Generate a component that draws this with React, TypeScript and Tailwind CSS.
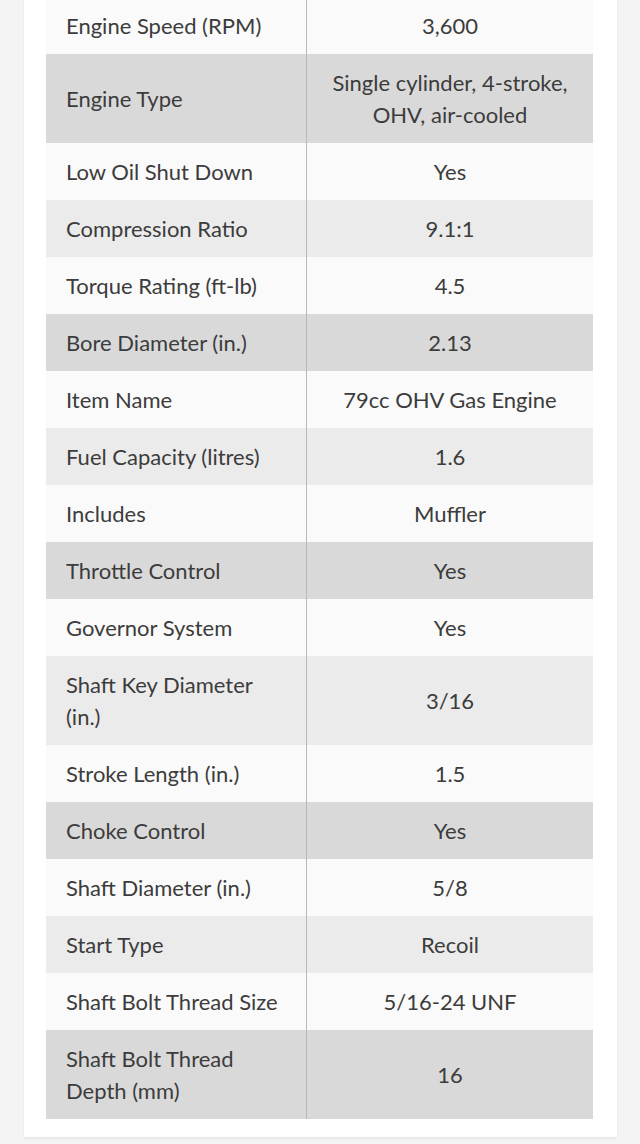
import React from "react";

type Row = { k: React.ReactNode; v: React.ReactNode; tone: "w" | "m" | "d" };

const rows: Row[] = [
  { k: "Engine Speed (RPM)", v: "3,600", tone: "w" },
  { k: "Engine Type", v: (<>Single cylinder, 4-stroke,<br />OHV, air-cooled</>), tone: "d" },
  { k: "Low Oil Shut Down", v: "Yes", tone: "w" },
  { k: "Compression Ratio", v: "9.1:1", tone: "m" },
  { k: "Torque Rating (ft-lb)", v: "4.5", tone: "w" },
  { k: "Bore Diameter (in.)", v: "2.13", tone: "d" },
  { k: "Item Name", v: "79cc OHV Gas Engine", tone: "w" },
  { k: "Fuel Capacity (litres)", v: "1.6", tone: "m" },
  { k: "Includes", v: "Muffler", tone: "w" },
  { k: "Throttle Control", v: "Yes", tone: "d" },
  { k: "Governor System", v: "Yes", tone: "w" },
  { k: (<>Shaft Key Diameter<br />(in.)</>), v: "3/16", tone: "m" },
  { k: "Stroke Length (in.)", v: "1.5", tone: "w" },
  { k: "Choke Control", v: "Yes", tone: "d" },
  { k: "Shaft Diameter (in.)", v: "5/8", tone: "w" },
  { k: "Start Type", v: "Recoil", tone: "m" },
  { k: "Shaft Bolt Thread Size", v: "5/16-24 UNF", tone: "w" },
  { k: (<>Shaft Bolt Thread<br />Depth (mm)</>), v: "16", tone: "d" },
];

const toneClass = {
  w: "bg-[#fafafa]",
  m: "bg-[#ebebeb]",
  d: "bg-[#d9d9d9]",
};

export default function App() {
  return (
    <div
      className="w-[640px] h-[1144px] overflow-hidden bg-[#f4f4f4]"
      style={{ fontFamily: "Lato, 'Open Sans', sans-serif" }}
    >
      <div className="ml-[24px] w-[593px] h-[1140px] bg-white pl-[22px] pr-[24px] shadow-[0_2px_3px_rgba(0,0,0,0.06)]">
        <div className="-mt-[3px] flex flex-col text-[22px] leading-[32px] text-[#3c3c3c]">
          {rows.map((r, i) => (
            <div key={i} className={`flex ${toneClass[r.tone]}`}>
              <div className="w-[260px] shrink-0 px-[20px] pt-[12.5px] pb-[12.5px] whitespace-nowrap flex items-center">
                <div>{r.k}</div>
              </div>
              <div className="w-px bg-[#b8b8b8] shrink-0" />
              <div className="flex-1 flex items-center justify-center text-center pt-[12.5px] pb-[12.5px] whitespace-nowrap">
                <div>{r.v}</div>
              </div>
            </div>
          ))}
        </div>
      </div>
    </div>
  );
}
